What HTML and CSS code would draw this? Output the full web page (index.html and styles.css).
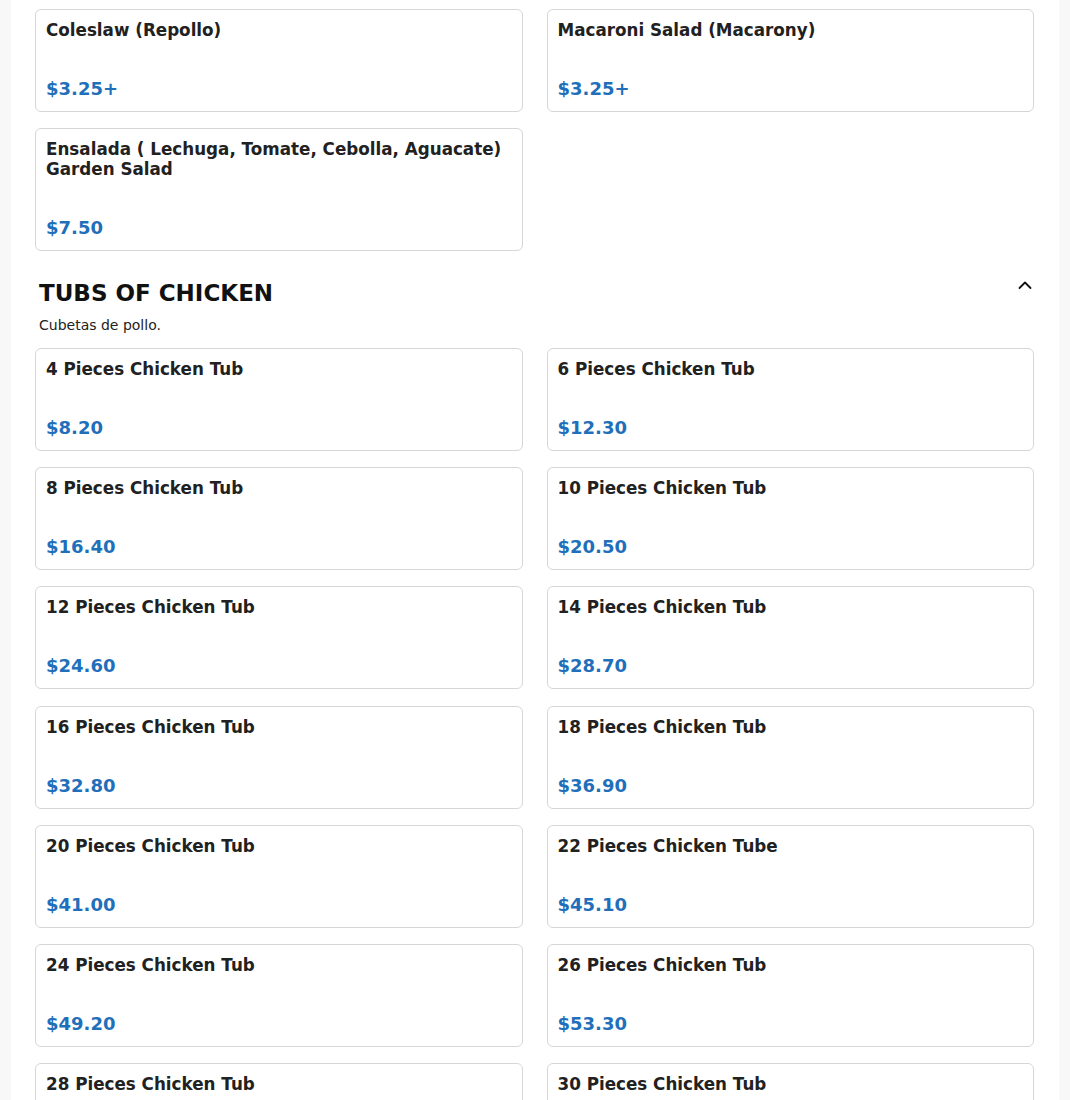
FILE: index.html
```html
<!DOCTYPE html>
<html lang="en">
<head>
<meta charset="utf-8">
<title>Menu</title>
<link rel="stylesheet" href="styles.css">
</head>
<body>
<div class="page">
  <div class="grid">
    <div class="card"><div class="name">Coleslaw (Repollo)</div><div class="price">$3.25+</div></div>
    <div class="card"><div class="name">Macaroni Salad (Macarony)</div><div class="price">$3.25+</div></div>
    <div class="card"><div class="name">Ensalada ( Lechuga, Tomate, Cebolla, Aguacate) Garden Salad</div><div class="price">$7.50</div></div>
  </div>

  <section class="section">
    <div class="section-head">
      <h2 class="section-title">TUBS OF CHICKEN</h2>
      <svg class="chevron" width="16" height="16" viewBox="0 0 16 16" aria-hidden="true"><path d="M2.5 11 L8 5.5 L13.5 11" fill="none" stroke="#111" stroke-width="1.8" stroke-linecap="round" stroke-linejoin="round"/></svg>
    </div>
    <p class="section-desc">Cubetas de pollo.</p>
    <div class="grid">
      <div class="card"><div class="name">4 Pieces Chicken Tub</div><div class="price">$8.20</div></div>
      <div class="card"><div class="name">6 Pieces Chicken Tub</div><div class="price">$12.30</div></div>
      <div class="card"><div class="name">8 Pieces Chicken Tub</div><div class="price">$16.40</div></div>
      <div class="card"><div class="name">10 Pieces Chicken Tub</div><div class="price">$20.50</div></div>
      <div class="card"><div class="name">12 Pieces Chicken Tub</div><div class="price">$24.60</div></div>
      <div class="card"><div class="name">14 Pieces Chicken Tub</div><div class="price">$28.70</div></div>
      <div class="card"><div class="name">16 Pieces Chicken Tub</div><div class="price">$32.80</div></div>
      <div class="card"><div class="name">18 Pieces Chicken Tub</div><div class="price">$36.90</div></div>
      <div class="card"><div class="name">20 Pieces Chicken Tub</div><div class="price">$41.00</div></div>
      <div class="card"><div class="name">22 Pieces Chicken Tube</div><div class="price">$45.10</div></div>
      <div class="card"><div class="name">24 Pieces Chicken Tub</div><div class="price">$49.20</div></div>
      <div class="card"><div class="name">26 Pieces Chicken Tub</div><div class="price">$53.30</div></div>
      <div class="card"><div class="name">28 Pieces Chicken Tub</div><div class="price">$57.40</div></div>
      <div class="card"><div class="name">30 Pieces Chicken Tub</div><div class="price">$61.50</div></div>
    </div>
  </section>
</div>
</body>
</html>
```

FILE: styles.css
```css
* { box-sizing: border-box; }
html, body { margin: 0; padding: 0; }
body {
  background: #f8f8f8;
  font-family: "DejaVu Sans", Verdana, sans-serif;
  color: #212121;
}
.page {
  width: 1048px;
  margin: 0 auto;
  background: #ffffff;
  padding: 9px 25px 40px 24px;
  min-height: 1100px;
}
.grid {
  display: grid;
  grid-template-columns: 1fr 1fr;
  column-gap: 24px;
  row-gap: 16.17px;
}
.card {
  border: 1px solid #d6d6d6;
  border-radius: 6px;
  padding: 10px 10px 10px 10px;
  display: flex;
  flex-direction: column;
  background: #fff;
}
.name {
  font-size: 16.75px;
  font-weight: bold;
  line-height: 20px;
  color: #212121;
}
.price {
  margin-top: 37px;
  font-size: 18px;
  font-weight: bold;
  line-height: 24px;
  color: #1f6fba;
}
.section { margin-top: 28px; }
.section-head {
  display: flex;
  align-items: center;
  justify-content: space-between;
  padding: 0 1px 0 4px;
}
.section-title {
  margin: 0;
  font-size: 23px;
  line-height: 29px;
  font-weight: bold;
  color: #111;
}
.chevron { margin-top: -18px; }
.section-desc {
  margin: 7px 0 13px 4px;
  font-size: 14px;
  line-height: 20px;
  color: #222;
}
```
